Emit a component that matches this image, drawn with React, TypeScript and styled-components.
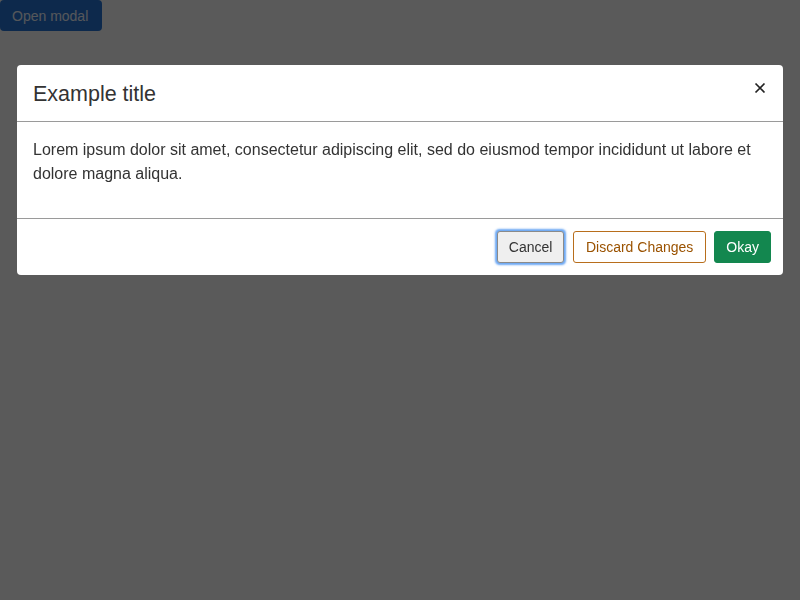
import React from "react";
import styled, { createGlobalStyle } from "styled-components";

const Global = createGlobalStyle`
  html, body { margin: 0; padding: 0; background: #ffffff; }
  body { font-family: "Liberation Sans", Arial, sans-serif; }
`;

const OpenButton = styled.button`
  margin: 0;
  height: 31px;
  width: 102px;
  padding: 0 12px;
  border: none;
  border-radius: 4px;
  background: #2575d8;
  color: #f0f6ff;
  font-family: "Liberation Sans", Arial, sans-serif;
  font-size: 14px;
  display: block;
  text-align: left;
`;

const Overlay = styled.div`
  position: fixed;
  inset: 0;
  background: rgba(0, 0, 0, 0.647);
  padding: 65px 17px 0;
  box-sizing: border-box;
`;

const Dialog = styled.div`
  background: #ffffff;
  border-radius: 4px;
  display: flex;
  flex-direction: column;
`;

const Header = styled.div`
  height: 57px;
  box-sizing: border-box;
  border-bottom: 1px solid #9a9a9a;
  display: flex;
  align-items: center;
  justify-content: space-between;
  padding: 0 16px 0 16px;
`;

const Title = styled.h2`
  margin: 0;
  font-size: 21.5px;
  font-weight: 400;
  color: #333333;
  padding-top: 3px;
`;

const Close = styled.button`
  border: none;
  background: none;
  padding: 0;
  width: 14px;
  height: 14px;
  display: flex;
  align-items: center;
  justify-content: center;
  margin-top: -11px;
`;

const Body = styled.div`
  padding: 16px 16px 32px;
  font-size: 16px;
  line-height: 24px;
  color: #333333;
  border-bottom: 1px solid #9a9a9a;
`;

const Footer = styled.div`
  display: flex;
  justify-content: flex-end;
  align-items: center;
  gap: 8px;
  padding: 12px 12px 12px;
`;

const Btn = styled.button<{ $variant: "plain" | "outline" | "success" }>`
  height: 32px;
  box-sizing: border-box;
  border-radius: 3px;
  font-family: "Liberation Sans", Arial, sans-serif;
  font-size: 14px;
  cursor: pointer;
  ${(p) =>
    p.$variant === "plain"
      ? `padding:0 10.5px;margin-right:1px;background:#efefef;color:#333;border:1px solid #8a8a8a;box-shadow:0 0 2px 1.5px rgba(70,145,240,0.8);`
      : p.$variant === "outline"
      ? `padding:0 12px;background:#fff;color:#9a5200;border:1px solid #b86e1c;`
      : `padding:0 11px;background:#13874f;color:#fff;border:1px solid #13874f;`}
`;

export default function App() {
  return (
    <>
      <Global />
      <OpenButton>Open modal</OpenButton>
      <Overlay>
        <Dialog>
          <Header>
            <Title>Example title</Title>
            <Close aria-label="Close">
              <svg width="12" height="12" viewBox="0 0 12 12">
                <path d="M1.5 1.5L10.5 10.5M10.5 1.5L1.5 10.5" stroke="#222" strokeWidth="1.7" />
              </svg>
            </Close>
          </Header>
          <Body>
            Lorem ipsum dolor sit amet, consectetur adipiscing elit, sed do eiusmod tempor incididunt ut labore et dolore magna aliqua.
          </Body>
          <Footer>
            <Btn $variant="plain">Cancel</Btn>
            <Btn $variant="outline">Discard Changes</Btn>
            <Btn $variant="success">Okay</Btn>
          </Footer>
        </Dialog>
      </Overlay>
    </>
  );
}
